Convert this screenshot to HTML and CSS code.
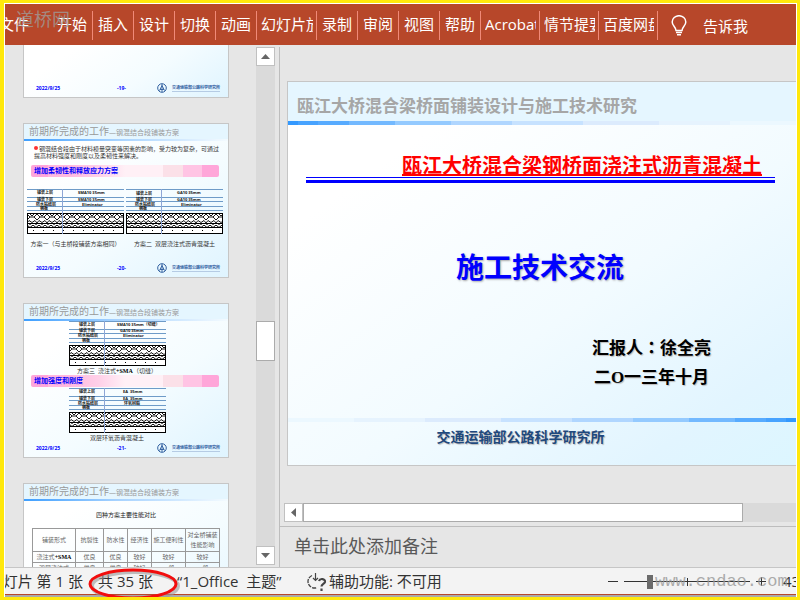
FILE: index.html
```html
<!DOCTYPE html>
<html lang="zh-CN">
<head>
	<meta charset="utf-8">
	<title>瓯江大桥混合梁桥面铺装设计与施工技术研究</title>
	<link rel="stylesheet" href="styles.css">
</head>
<body>
<svg class="defs" width="0" height="0">
	<defs>
		<pattern id="zig" width="10" height="10" patternUnits="userSpaceOnUse">
			<path d="M0 1L3 4H7L10 1M3 1L5 3L7 1M0 7L3 4M10 7L7 4M0 10L2 7.500L5 9.500L8 7.500L10 10" fill="none" stroke="#000" stroke-width=".9"/>
		</pattern>
		<pattern id="arc" width="6" height="3" patternUnits="userSpaceOnUse">
			<path d="M0 0L3 2.500L6 0" fill="none" stroke="#000"/>
		</pattern>
		<symbol id="layers" viewBox="0 0 97 46">
			<path d="M0 .5H97M0 8.5H97M0 12.5H97M0 17.5H97M0 21.5H97" stroke="#6e9bc8"/>
			<g transform="translate(0 24)">
				<rect x=".5" y=".5" width="96" height="20" fill="#fff"/>
				<rect x="1" y="0" width="95" height="10" fill="url(#zig)"/>
				<rect x="1" y="11" width="95" height="3" fill="url(#arc)"/>
				<path d="M0 10.5H97M0 14.5H97" stroke="#000"/>
				<path d="M6 17.5H92" stroke="#000" stroke-dasharray="1 9"/>
				<rect x=".5" y=".5" width="96" height="20" fill="none" stroke="#000"/>
			</g>
			<path d="M35.5 0V45" stroke="#8ea6d6"/>
		</symbol>
		<symbol id="logo" viewBox="0 0 10 10">
			<circle cx="5" cy="5" r="4.3" fill="none" stroke="#2f5f9f" stroke-width="1"/>
			<path d="M5 1V9M5 2.5L2.5 7.5M5 2.5L7.5 7.5M3 6.5H7" fill="none" stroke="#2f5f9f" stroke-width=".9"/>
		</symbol>
	</defs>
</svg>

<div class="app">
	<nav class="menu">
		<a href="#" class="file"><span>文件</span></a>
		<a href="#" class="home">开始</a>
		<a href="#">插入</a>
		<a href="#">设计</a>
		<a href="#">切换</a>
		<a href="#">动画</a>
		<a href="#" class="wide show">幻灯片放映</a>
		<a href="#">录制</a>
		<a href="#">审阅</a>
		<a href="#">视图</a>
		<a href="#">帮助</a>
		<a href="#" class="wide">Acrobat</a>
		<a href="#" class="wide">情节提要</a>
		<a href="#" class="wide">百度网盘</a>
		<button class="tell">
			<svg width="16" height="21" viewBox="0 0 16 21"><path d="M5 15.5C5 12 1.2 11 1.2 7A6.8 6.3 0 0 1 14.8 7C14.8 11 11 12 11 15.5ZM5 17.5H11M6 19.8H10" fill="none" stroke="#fff" stroke-width="1.5"/></svg>
			告诉我
		</button>
		<div class="mark">道桥网</div>
	</nav>

	<div class="work">
		<div class="thumbs">
			<div class="thumb cut">
				<div class="foot"><span class="date">2022/9/25</span><span class="num">-19-</span><svg width="10" height="10"><use href="#logo"/></svg><span class="org">交通运输部公路科学研究所</span></div>
			</div>

			<div class="thumb">
				<div class="head">前期所完成的工作<small>—钢混结合段铺装方案</small></div>
				<p class="intro"><i></i>钢混结合段由于材料模量突变等因素的影响，受力较为复杂，可通过<br>提高材料强度和刚度以及柔韧性来解决。</p>
				<div class="band">增加柔韧性和释放应力方案</div>
				<div class="pair">
					<figure>
						<svg width="97" height="46"><use href="#layers"/>
							<g class="lab"><text x="10" y="5">铺装上层</text><text x="10" y="12">铺装下层</text><text x="9" y="17">防水粘结层</text><text x="13" y="21">钢板</text>
							<text x="51" y="5">SMA10 35mm</text><text x="51" y="12">SMA10 35mm</text><text x="55" y="17">Eliminator</text></g>
						</svg>
						<figcaption>方案一（与主桥段铺装方案相同）</figcaption>
					</figure>
					<figure>
						<svg width="97" height="46"><use href="#layers"/>
							<g class="lab"><text x="10" y="6">铺装上层</text><text x="10" y="12">铺装下层</text><text x="9" y="17">防水粘结层</text><text x="13" y="21">钢板</text>
							<text x="51" y="5">GA10 35mm</text><text x="51" y="12">GA10 35mm</text><text x="55" y="17">Eliminator</text></g>
						</svg>
						<figcaption>方案二&ensp;双层浇注式沥青混凝土</figcaption>
					</figure>
				</div>
				<div class="foot"><span class="date">2022/9/25</span><span class="num">-20-</span><svg width="10" height="10"><use href="#logo"/></svg><span class="org">交通运输部公路科学研究所</span></div>
			</div>

			<div class="thumb">
				<div class="head">前期所完成的工作<small>—钢混结合段铺装方案</small></div>
				<figure class="single">
					<svg width="97" height="46"><use href="#layers"/>
						<g class="lab"><text x="10" y="5">铺装上层</text><text x="10" y="11">铺装下层</text><text x="9" y="16">防水粘结层</text><text x="13" y="21">钢板</text>
						<text x="48" y="5">SMA10 35mm（切缝）</text><text x="51" y="11">GA10 35mm</text><text x="54" y="16">Eliminator</text></g>
					</svg>
					<figcaption>方案三&ensp;浇注式<b>+SMA</b>（切缝）</figcaption>
				</figure>
				<div class="band">增加强度和刚度</div>
				<figure class="single second">
					<svg width="97" height="46"><use href="#layers"/>
						<g class="lab"><text x="10" y="5">铺装上层</text><text x="10" y="12">铺装下层</text><text x="9" y="17">防水粘结层</text><text x="13" y="21">钢板</text>
						<text x="54" y="5">EA&ensp;35mm</text><text x="54" y="12">EA&ensp;35mm</text><text x="55" y="17">环氧树脂</text></g>
					</svg>
					<figcaption>双层环氧沥青混凝土</figcaption>
				</figure>
				<div class="foot"><span class="date">2022/9/25</span><span class="num">-21-</span><svg width="10" height="10"><use href="#logo"/></svg><span class="org">交通运输部公路科学研究所</span></div>
			</div>

			<div class="thumb">
				<div class="head">前期所完成的工作<small>—钢混结合段铺装方案</small></div>
				<table>
					<caption>四种方案主要性能对比</caption>
					<tr><th class="c1">铺装形式</th><th class="c2">抗裂性</th><th class="c3">防水性</th><th class="c3">经济性</th><th class="c4">施工便利性</th><th class="c4">对全桥铺装<br>性能影响</th></tr>
					<tr><td>浇注式<b>+SMA</b></td><td>优良</td><td>优良</td><td>较好</td><td>较好</td><td>较好</td></tr>
					<tr><td>双层浇注式</td><td>优良</td><td>优良</td><td>较好</td><td>一般</td><td>一般</td></tr>
				</table>
			</div>
		</div>

		<div class="vbar">
			<button aria-label="向上滚动"><svg width="9" height="5"><path d="M0 5L4.5 0L9 5Z"/></svg></button>
			<div class="track"><div class="grip"></div></div>
			<button aria-label="向下滚动"><svg width="9" height="5"><path d="M0 0L4.5 5L9 0Z"/></svg></button>
		</div>

		<div class="edit">
			<div class="stage">
				<div class="slide">
					<h1>瓯江大桥混合梁桥面铺装设计与施工技术研究</h1>
					<div class="steps"></div>
					<div class="topic"><span>瓯江大桥混合梁钢桥面浇注式沥青混凝土</span></div>
					<div class="rule"></div>
					<h2>施工技术交流</h2>
					<p class="who">汇报人<span class="colon" lang="zh-TW">：</span>徐全亮<br>二<span>O</span>一三年十月</p>
					<div class="steps back"></div>
					<p class="unit">交通运输部公路科学研究所</p>
				</div>
			</div>
			<div class="hbar">
				<button aria-label="向左滚动"><svg width="5" height="9"><path d="M5 0L0 4.5L5 9Z"/></svg></button>
				<div class="grip"></div>
			</div>
			<div class="notes">单击此处添加备注</div>
		</div>
	</div>

	<footer class="status">
		<div class="page"><span>幻灯片 第 1 张</span></div>
		<div class="total">共 35 张
			<svg class="ring" width="96" height="38" viewBox="0 0 96 38">
				<ellipse cx="49" cy="19" rx="43" ry="14" fill="none" stroke="#999" stroke-opacity=".6" stroke-width="4"/>
				<ellipse cx="47" cy="17" rx="43" ry="14" fill="none" stroke="#f20d0d" stroke-width="3"/>
			</svg>
		</div>
		<div class="theme">“1_Office&nbsp; 主题”</div>
		<button class="access">
			<svg width="20" height="18" viewBox="0 0 20 18"><path d="M5 2.500A6 6 0 1 0 10 14.500" fill="none" stroke="#444" stroke-width="1.300" stroke-dasharray="4 1"/><path d="M8.500 0V7M6 5L8.500 7.500L11 5" fill="none" stroke="#444" stroke-width="1.200"/><path d="M12 8C13 5 18.500 5.500 18 9C17.500 11 14.500 11 14.500 13.500M14.500 15.500V18" fill="none" stroke="#444" stroke-width="2.200"/></svg>
			辅助功能: 不可用
		</button>
		<div class="zoom">
			<button aria-label="缩小"><svg width="10" height="10"><path d="M0 4.500H10" stroke="#333"/></svg></button>
			<input type="range" min="0" max="100" value="19" aria-label="缩放">
			<button aria-label="放大"><svg width="10" height="10"><path d="M0 4.500H10M5.500 0V9" stroke="#333"/></svg></button>
			<span class="pct">43%</span>
			<div class="site">www.cndao.com</div>
		</div>
	</footer>
</div>
</body>
</html>
```
FILE: styles.css
```css
*{
	margin:0px;
	padding:0px;
	box-sizing: border-box;
}
body{
	font-family: "Open Sans","Noto Sans CJK SC",sans-serif;
	font-size: 15px;
	background: #fff;
}
button{
	border: 0;
	background: none;
	font: inherit;
	color: inherit;
}
.defs{
	position: absolute;
}
.app{
	height: 100vh;
	display: flex;
	flex-direction: column;
	border: 3px solid #ffe80c;
	border-left-width: 4px;
	padding: 1px 1px 0 1px;
	overflow: hidden;
}

/* menu */
.menu{
	position: relative;
	flex: none;
	display: flex;
	height: 41px;
	padding: 7px 0 5px;
	background: #b7472a;
	color: #fff;
	line-height: 26px;
	white-space: nowrap;
	overflow: hidden;
}
.menu a{
	flex: none;
	width: 41px;
	padding-left: 5px;
	border-right: 1px solid #f08a78;
	color: #fff;
	text-decoration: none;
	overflow: hidden;
}
.menu .file{
	display: flex;
	justify-content: flex-end;
	width: 24px;
	padding: 0;
	border: 0;
}
.menu .home{
	width: 64px;
	padding-left: 28px;
}
.menu .wide{
	width: 59px;
	padding-left: 4px;
	border-right: 0;
	background: linear-gradient(#f08a78,#f08a78) right / 1px 100% no-repeat;
	padding-right: 4px;
	overflow: clip;
	overflow-clip-margin: content-box;
}
.menu .show{
	width: 60px;
}
.tell{
	display: flex;
	align-items: center;
	gap: 16px;
	padding-left: 13px;
}
.mark{
	position: absolute;
	left: 11px;
	top: 2px;
	font-size: 18px;
	color: #a09a96;
	opacity: .8;
}

.work{
	flex: 1;
	min-height: 0;
	display: flex;
	background: #e6e6e6;
}

/* slide list */
.thumbs{
	flex: none;
	width: 251px;
	padding-left: 18px;
	display: flex;
	flex-direction: column;
	gap: 25px;
	overflow: hidden;
}
.thumb{
	flex: none;
	display: flex;
	flex-direction: column;
	width: 206px;
	height: 155px;
	border: 1px solid #c6c6c6;
	background: linear-gradient(145deg,#fff 20%,#f4fcff 60%,#dff4ff);
	font-size: 6px;
	line-height: 8px;
	color: #333;
	white-space: nowrap;
	overflow: hidden;
}
.cut{
	height: 53px;
	border-top: 0;
}
.head{
	height: 17px;
	padding-left: 5px;
	border-bottom: 2px solid;
	border-image: linear-gradient(90deg,#3d9eff,#a6d2ff 45%,#f4fbff) 1;
	background: #e5f6ff;
	font-size: 10px;
	line-height: 15px;
	color: #999;
}
.head small{
	font-size: 7px;
}
.intro{
	margin: 5px 0 5px 10px;
	line-height: 7px;
}
.intro i{
	display: inline-block;
	width: 4px;
	height: 4px;
	margin-right: 1px;
	border-radius: 2px;
	background: #f33;
	vertical-align: 1px;
}
.band{
	flex: none;
	height: 12px;
	margin: 0 9px 0 7px;
	padding-left: 3px;
	border-radius: 2px;
	background: linear-gradient(90deg,#ffa6d9 9%,#ffb8df 9% 20%,#ffd0e8 36%,#fff0f6 50% 70%,#fbe0e8 70% 81%,#ffc4e4 81% 91%,#ffa6d9 91%);
	font-size: 7px;
	font-weight: bold;
	line-height: 12px;
	color: #00f;
}
.pair{
	display: flex;
	gap: 2px;
	margin: 12px 0 0 3px;
}
figure{
	text-align: center;
}
.single{
	align-self: center;
	margin-right: 18px;
}
.second{
	margin-top: 1px;
}
figure svg{
	display: block;
}
.pair figcaption{
	margin-top: 5px;
}
figcaption b, td b{
	font-family: "Liberation Serif",serif;
	color: #000;
}
.lab{
	font-size: 4px;
	font-weight: bold;
	fill: #111;
}
.foot{
	display: flex;
	align-items: center;
	height: 10px;
	margin: auto 0 4px 12px;
	font-size: 5px;
	font-weight: bold;
	color: #00f;
}
.date{
	width: 81px;
}
.num{
	width: 40px;
}
.org{
	margin-left: 5px;
	border-bottom: 1px solid #b5cbe4;
	font-size: 4px;
	line-height: 6px;
	color: #2f5f9f;
}
table{
	width: 188px;
	margin: 10px 0 0 8px;
	border-collapse: collapse;
	table-layout: fixed;
	line-height: 10px;
	text-align: center;
	color: #666;
}
caption{
	margin-bottom: 9px;
	line-height: 8px;
	color: #222;
}
th,td{
	height: 11px;
	border: 1px solid #999;
	font-weight: normal;
}
th{
	height: 23px;
}
.c1{
	width: 43px;
}
.c2{
	width: 28px;
}
.c3{
	width: 24px;
}
.c4{
	width: 34px;
}

/* scroll bars */
.vbar{
	flex: none;
	display: flex;
	flex-direction: column;
	width: 19px;
	margin: 2px 0;
	background: #dadada;
}
.vbar button,.hbar button{
	flex: none;
	display: flex;
	align-items: center;
	justify-content: center;
	width: 19px;
	height: 19px;
	border: 1px solid #c0c0c0;
	background: #fff;
	fill: #666;
}
.track{
	flex: 1;
	display: flex;
	flex-direction: column;
}
.track:before{
	content: "";
	flex: 255;
}
.track:after{
	content: "";
	flex: 185;
}
.grip{
	border: 1px solid #ababab;
	background: #fff;
}
.track .grip{
	height: 40px;
}
.edit{
	flex: 1;
	min-width: 0;
	display: flex;
	flex-direction: column;
	margin: 2px 0 0 4px;
	border-left: 1px solid #bdbdbd;
}
.stage{
	flex: 1;
	padding: 34px 0 0 7px;
}
.hbar{
	display: flex;
	height: 19px;
	margin: 0 0 4px 4px;
	background: #dadada;
}
.hbar .grip{
	width: 86%;
}
.notes{
	height: 41px;
	padding-left: 14px;
	border-top: 1px solid #bdbdbd;
	font-size: 18px;
	line-height: 38px;
	color: #595959;
}

/* current slide */
.slide{
	display: flex;
	flex-direction: column;
	height: 385px;
	border: 1px solid #c6c6c6;
	border-right: 0;
	background: linear-gradient(145deg,#fff 20%,#f2fbff 58%,#e2f5ff 85%,#dcf6ff);
	font-weight: bold;
	white-space: nowrap;
}
.slide h1{
	height: 39px;
	padding-left: 9px;
	background: #e5f6ff;
	font-size: 17px;
	line-height: 47px;
	color: #a6a6a6;
}
.steps{
	flex: none;
	height: 4px;
	background: linear-gradient(90deg,#3399ff 2%,#47a3ff 2% 6%,#57abff 6% 12%,#73b9ff 12% 21%,#94caff 21% 32%,#b0d6ff 32% 44%,#c7e2ff 44% 58%,#dcebfd 58% 73%,#e6f3fe 73% 87%,#ecf8ff 87%);
}
.back{
	transform: scaleX(-1);
}
.topic{
	height: 27px;
	margin: 25px 34px 0 18px;
	font-size: 20px;
	line-height: 32px;
	text-align: right;
	color: #f00;
}
.topic span{
	text-decoration: underline;
}
.rule{
	height: 6px;
	margin: 0 21px 0 18px;
	border-top: 1px solid #00f;
	border-bottom: 3px solid #00f;
}
.slide h2{
	margin-top: 64px;
	padding-right: 4px;
	font-size: 28px;
	line-height: 40px;
	text-align: center;
	color: #00f;
	text-shadow: 1px 1px 2px #aaa;
}
.who{
	align-self: flex-end;
	margin: 45px 85px 0 0;
	font-size: 17px;
	line-height: 29px;
	text-align: center;
	text-shadow: 1px 1px 1px #bbb;
}
.who span{
	font-family: "Liberation Serif",serif;
}
.who .colon{
	font-family: "Noto Sans CJK TC",sans-serif;
}
.slide .back{
	margin-top: 26px;
}
.unit{
	padding-right: 43px;
	font-size: 14px;
	line-height: 29px;
	text-align: center;
	color: #1f497d;
	text-shadow: 1px 1px 1px #bbb;
}

/* status bar */
.status{
	flex: none;
	display: flex;
	height: 30px;
	border-top: 1px solid #c6c6c6;
	border-bottom: 2px solid #aaa;
	background: #f3f3f3;
	box-shadow: inset 0 -1px #b7472a;
	line-height: 27px;
	color: #333;
	white-space: nowrap;
}
.page{
	display: flex;
	justify-content: flex-end;
	width: 78px;
	overflow: hidden;
}
.total{
	position: relative;
	width: 80px;
	padding-left: 15px;
}
.ring{
	position: absolute;
	left: 3px;
	top: -1px;
	z-index: 1;
}
.theme{
	padding-left: 14px;
	width: 144px;
}
.access{
	display: flex;
	align-items: center;
	gap: 2px;
}
.zoom{
	position: relative;
	display: flex;
	align-items: center;
	gap: 6px;
	width: 188px;
	margin-left: auto;
	overflow: hidden;
}
.zoom button{
	flex: none;
	width: 10px;
	height: 10px;
	line-height: 10px;
}
.zoom svg{
	display: block;
}
.zoom input{
	flex: none;
	width: 126px;
	height: 14px;
	appearance: none;
	background: linear-gradient(#333,#333) center / 1px 8px no-repeat,linear-gradient(#333,#333) center / 100% 1px no-repeat;
}
.zoom input::-webkit-slider-thumb{
	appearance: none;
	width: 6px;
	height: 14px;
	background: #6b6b6b;
}
.pct{
	margin-left: 11px;
}
.site{
	position: absolute;
	left: 47px;
	top: 0;
	font-family: "Liberation Mono",monospace;
	font-size: 17px;
	color: #999;
	opacity: .8;
}
```
